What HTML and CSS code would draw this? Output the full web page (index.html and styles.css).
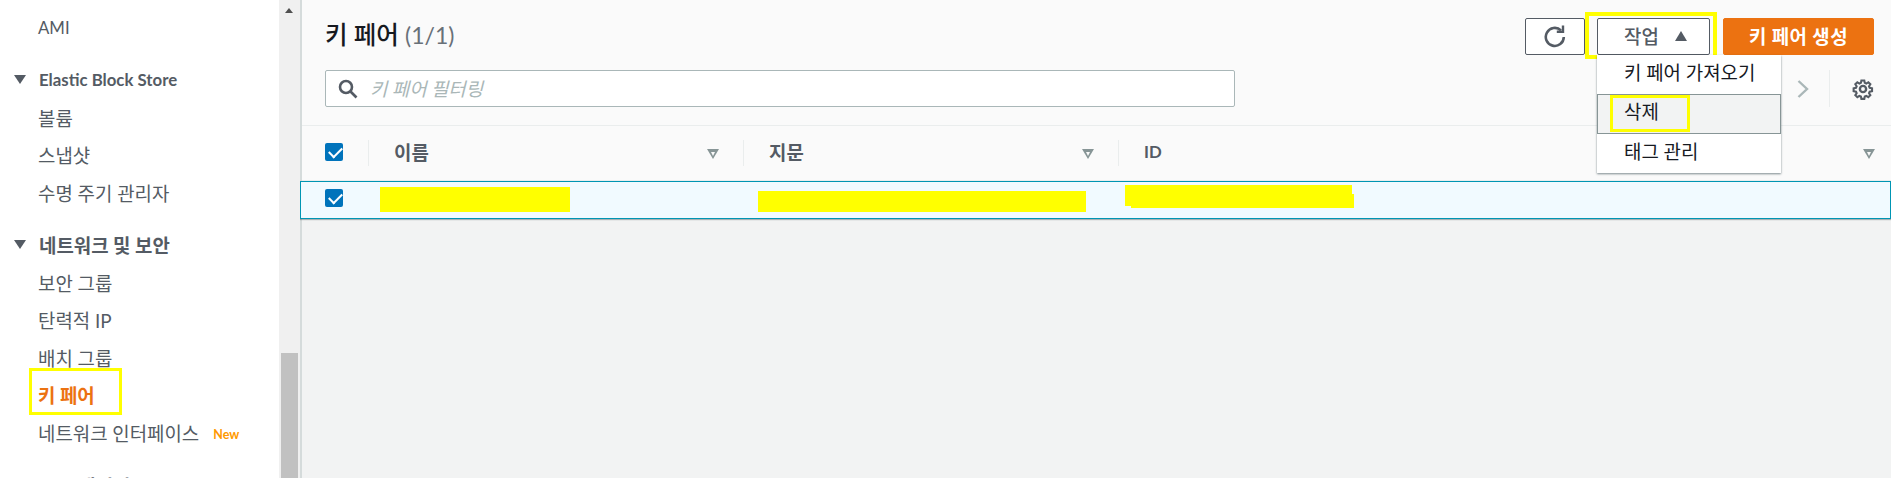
FILE: index.html
```html
<!DOCTYPE html>
<html lang="ko">
<head>
    <meta charset="UTF-8">
    <title>키 페어</title>
    <link rel="stylesheet" href="styles.css">
</head>
<body>
    <div class="page">
        <nav class="sidebar">
            <a class="nav-item latin">AMI</a>
            <div class="nav-head latin"><span class="caret"></span>Elastic Block Store</div>
            <a class="nav-item">볼륨</a>
            <a class="nav-item">스냅샷</a>
            <a class="nav-item">수명 주기 관리자</a>
            <div class="nav-head"><span class="caret"></span>네트워크 및 보안</div>
            <a class="nav-item">보안 그룹</a>
            <a class="nav-item">탄력적 IP</a>
            <a class="nav-item">배치 그룹</a>
            <a class="nav-item active">키 페어<span class="mark mark-nav"></span></a>
            <a class="nav-item">네트워크 인터페이스<span class="new">New</span></a>
            <div class="nav-head cut"><span class="caret"></span>로드 밸런싱</div>
        </nav>
        <div class="scrollbar">
            <span class="scroll-up"></span>
            <span class="scroll-thumb"></span>
        </div>
        <main class="main">
            <div class="panel">
                <div class="title-row">
                    <h1>키 페어 <span class="count">(1/1)</span></h1>
                    <div class="actions">
                        <button class="btn btn-icon" aria-label="새로 고침">
                            <svg width="24" height="24" viewBox="0 0 24 24" fill="none" stroke="#545b64" stroke-width="2.6">
                                <path d="M20.8 13a9 9 0 1 1-2.8-6.6"/>
                                <path d="M20 1.5v6.2h-6.2" stroke-width="2.4"/>
                            </svg>
                        </button>
                        <div class="menu-wrap">
                            <button class="btn btn-menu">작업<span class="caret-up"></span></button>
                            <span class="mark mark-btn"></span>
                            <ul class="menu">
                                <li>키 페어 가져오기</li>
                                <li class="hover">삭제<span class="mark mark-del"></span></li>
                                <li>태그 관리</li>
                            </ul>
                        </div>
                        <button class="btn btn-primary">키 페어 생성</button>
                    </div>
                </div>
                <div class="filter-row">
                    <div class="search">
                        <svg width="20" height="20" viewBox="0 0 20 20" fill="none" stroke="#545b64" stroke-width="2.6">
                            <circle cx="8" cy="8" r="6"/>
                            <path d="M12.5 12.5l6 6"/>
                        </svg>
                        <span class="placeholder">키 페어 필터링</span>
                    </div>
                    <div class="pager">
                        <svg width="12" height="20" viewBox="0 0 12 20" fill="none" stroke="#aab7b8" stroke-width="2.4">
                            <path d="M1.5 2l8.5 8-8.5 8"/>
                        </svg>
                        <span class="pager-sep"></span>
                        <svg class="gear" width="22" height="22" viewBox="0 0 24 24" fill="none" stroke="#545b64" stroke-width="2.6">
                            <circle cx="12" cy="12" r="3.4"/>
                            <path d="M10.2 2.5h3.6l.6 2.9 1.9.8 2.5-1.6 2.5 2.5-1.6 2.5.8 1.9 2.9.6v3.6l-2.9.6-.8 1.9 1.6 2.5-2.5 2.5-2.5-1.6-1.9.8-.6 2.9h-3.6l-.6-2.9-1.9-.8-2.5 1.6-2.5-2.5 1.6-2.5-.8-1.9-2.9-.6v-3.6l2.9-.6.8-1.9-1.6-2.5 2.5-2.5 2.5 1.6 1.9-.8z" transform="translate(12 12) scale(.88) translate(-12.2 -13)"/>
                        </svg>
                    </div>
                </div>
            </div>
            <div class="table">
                <div class="tr thead">
                    <div class="td td-check"><span class="check"></span></div>
                    <div class="td td-name">이름<span class="sort"></span></div>
                    <div class="td td-print">지문<span class="sort"></span></div>
                    <div class="td td-id"><span class="latin">ID</span><span class="sort"></span></div>
                </div>
                <div class="tr selected">
                    <div class="td td-check"><span class="check"></span></div>
                    <div class="td td-name"><span class="redact redact-name"></span></div>
                    <div class="td td-print"><span class="redact redact-print"></span></div>
                    <div class="td td-id"><span class="redact redact-id"></span><span class="redact redact-id2"></span></div>
                </div>
            </div>
        </main>
    </div>
</body>
</html>
```

FILE: styles.css
```css
* {
    box-sizing: border-box;
}
body {
    margin: 0;
    font-family: 'Lato', 'Noto Sans CJK KR', sans-serif;
    font-size: 18.9px;
    color: #16191f;
    background: #f2f3f3;
    overflow: hidden;
}
.latin {
    font-size: 16.8px;
}
.page {
    display: flex;
    height: 478px;
    overflow: hidden;
}

/* sidebar */
.sidebar {
    width: 279px;
    flex: none;
    background: #fff;
    color: #545b64;
    padding-top: 9px;
    overflow: hidden;
}
.nav-item {
    display: flex;
    align-items: center;
    position: relative;
    height: 37.6px;
    padding-left: 38px;
    white-space: nowrap;
}
.nav-item.active {
    color: #ec7211;
    font-weight: 700;
}
.new {
    margin-left: 14px;
    margin-top: 4px;
    font-size: 12.5px;
    font-weight: 700;
    color: #ff9900;
}
.nav-head {
    display: flex;
    align-items: center;
    height: 38px;
    margin-top: 14px;
    padding-left: 14px;
    font-weight: 700;
    white-space: nowrap;
}
.nav-head.cut {
    margin-top: 15px;
}
.caret {
    width: 0;
    height: 0;
    margin-right: 13px;
    border-left: 6.5px solid transparent;
    border-right: 6.5px solid transparent;
    border-top: 9px solid #545b64;
}

/* scrollbar */
.scrollbar {
    width: 21px;
    flex: none;
    position: relative;
    background: #f0f0f0;
}
.scroll-up {
    position: absolute;
    top: 8px;
    left: 6px;
    border-left: 4.5px solid transparent;
    border-right: 4.5px solid transparent;
    border-bottom: 5px solid #505050;
}
.scroll-thumb {
    position: absolute;
    top: 353px;
    bottom: 0;
    left: 2px;
    right: 2px;
    background: #c1c1c1;
}

/* main area */
.main {
    flex: 1;
    min-width: 0;
    border-left: 2px solid #d5dbdb;
}
.panel {
    height: 126px;
    padding: 18px 17px 0 23px;
    background: #fafafa;
    border-bottom: 1px solid #eaeded;
}
.title-row {
    display: flex;
    justify-content: space-between;
    align-items: flex-start;
    height: 37px;
}
h1 {
    margin: 0;
    font-size: 24.5px;
    line-height: 34px;
    font-weight: 500;
}
.count {
    font-size: 23px;
    font-weight: 400;
    color: #687078;
}
.actions {
    display: flex;
    gap: 12px;
}
.btn {
    height: 37px;
    border: 1px solid #545b64;
    border-radius: 2px;
    background: #fff;
    color: #545b64;
    font-family: inherit;
    font-size: 18.9px;
    font-weight: 500;
    padding: 0 0 2px;
}
.btn-icon {
    display: flex;
    align-items: center;
    justify-content: center;
    width: 60px;
}
.btn-menu {
    display: flex;
    align-items: center;
    width: 113px;
    padding-left: 26px;
}
.caret-up {
    margin-left: 16px;
    border-left: 6.5px solid transparent;
    border-right: 6.5px solid transparent;
    border-bottom: 10px solid #545b64;
}
.btn-primary {
    width: 151px;
    margin-left: 1px;
    border-color: #ec7211;
    background: #ec7211;
    color: #fff;
    font-weight: 700;
    letter-spacing: .4px;
}
.menu-wrap {
    position: relative;
}
.menu {
    position: absolute;
    z-index: 2;
    top: 37px;
    left: 0;
    width: 184px;
    margin: 0;
    padding: 0;
    list-style: none;
    background: #fff;
    box-shadow: 0 1px 2px rgba(0,28,36,.5);
}
.menu li {
    position: relative;
    height: 39.3px;
    padding: 0 26px;
    line-height: 33px;
    border: 1px solid transparent;
    color: #16191f;
    white-space: nowrap;
}
.menu li.hover {
    background: #f2f3f3;
    border-color: #879596;
}

/* yellow annotations from the screenshot */
.mark {
    position: absolute;
    border: 3px solid #ffff00;
    pointer-events: none;
}
.mark-nav {
    left: 29px;
    top: -8px;
    width: 93px;
    height: 47px;
}
.mark-btn {
    top: -6px;
    left: -12px;
    width: 132px;
    height: 47px;
    border-width: 4px;
}
.mark-del {
    top: 0;
    left: 12px;
    width: 80px;
    height: 37px;
}
.redact {
    position: absolute;
    background: #ffff00;
}
.redact-name {
    left: 12px;
    top: 5px;
    width: 190px;
    height: 25px;
}
.redact-print {
    left: 15px;
    top: 9px;
    width: 328px;
    height: 21px;
}
.redact-id {
    left: 7px;
    top: 3px;
    width: 227px;
    height: 21px;
}
.redact-id2 {
    left: 13px;
    top: 12px;
    width: 223px;
    height: 14px;
}

/* filter row */
.filter-row {
    display: flex;
    justify-content: space-between;
    margin-top: 15px;
}
.search {
    display: flex;
    align-items: center;
    gap: 12px;
    width: 910px;
    height: 37px;
    padding-left: 12px;
    background: #fff;
    border: 1px solid #aab7b8;
    border-radius: 2px;
}
.placeholder {
    margin-top: -3px;
    font-style: italic;
    color: #aab7b8;
}
.pager {
    display: flex;
    align-items: center;
}
.pager-sep {
    width: 1px;
    height: 37px;
    margin: 0 22px 0 20px;
    background: #eaeded;
}

/* table */
.tr {
    display: grid;
    grid-template-columns: 66px 375px 375px 1fr;
}
.thead {
    height: 55px;
    background: #fafafa;
    border-bottom: 1px solid #eaeded;
    font-weight: 700;
    color: #545b64;
}
.td {
    position: relative;
    display: flex;
    align-items: center;
    padding-left: 26px;
}
.thead .td:not(.td-check) {
    padding-bottom: 3px;
}
.td-check {
    padding-left: 23px;
}
.thead .td:not(.td-check)::before {
    content: "";
    position: absolute;
    left: 0;
    top: 14px;
    bottom: 14px;
    width: 1px;
    background: #eaeded;
}
.selected {
    grid-template-columns: 67px 375px 375px 1fr;
    height: 38px;
    margin-left: -2px;
    background: #f1faff;
    border: 1px solid #0095b3;
    box-shadow: 0 1px 1px rgba(0,28,36,.3);
}
.selected .td-check {
    padding-left: 24px;
}
.check {
    position: relative;
    width: 18px;
    height: 18px;
    margin-top: -2px;
    background: #0073bb;
    border-radius: 2px;
}
.selected .check {
    margin-top: -4px;
}
.check::after {
    content: "";
    position: absolute;
    left: 3.5px;
    top: 3.5px;
    width: 11px;
    height: 6px;
    border-left: 2.6px solid #fff;
    border-bottom: 2.6px solid #fff;
    transform: rotate(-45deg);
}
.sort {
    position: absolute;
    right: 24px;
    top: 23px;
    width: 0;
    height: 0;
    border-left: 6.5px solid transparent;
    border-right: 6.5px solid transparent;
    border-top: 10px solid #879596;
}
.sort::after {
    content: "";
    position: absolute;
    left: -2.5px;
    top: -7.5px;
    border-left: 2.5px solid transparent;
    border-right: 2.5px solid transparent;
    border-top: 4px solid #fafafa;
}
.td-id .sort {
    right: 16px;
}
```
